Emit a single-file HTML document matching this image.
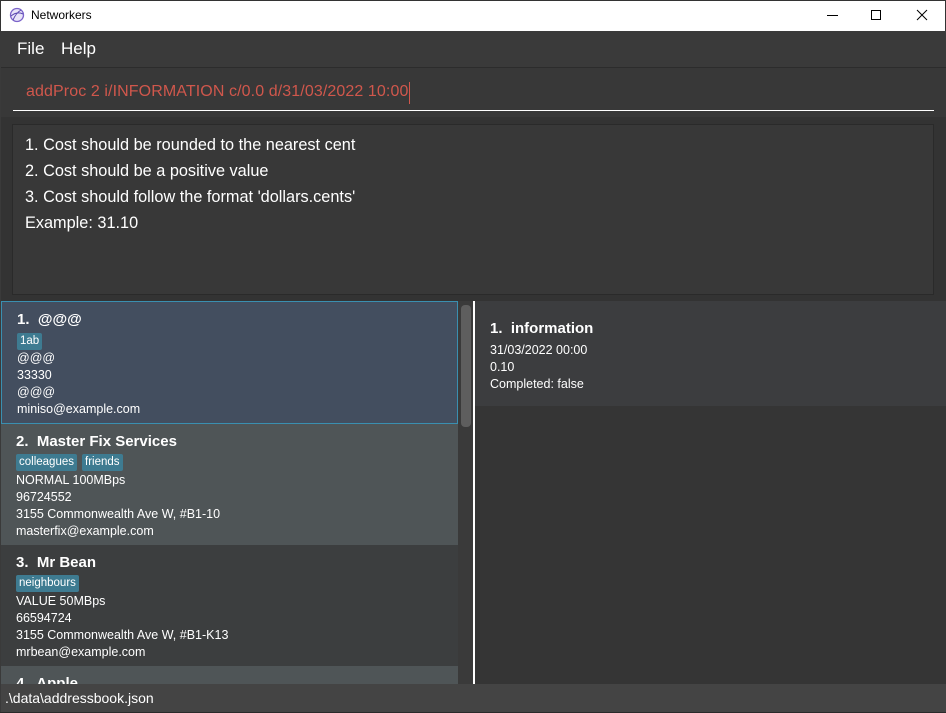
<!DOCTYPE html>
<html><head><meta charset="utf-8"><style>
*{margin:0;padding:0;box-sizing:border-box}
body{width:946px;height:713px;overflow:hidden;background:#3a3a3a;font-family:"Liberation Sans",sans-serif;position:relative}
.a{position:absolute;white-space:nowrap}
.tag{position:absolute;background:#3e7b91;color:#fff;font-size:11.5px;height:17px;line-height:17px;padding:0 3px;border-radius:2px}
.nm{font-size:15px;font-weight:bold;color:#fff}
.ln{font-size:12.5px;color:#fff}
</style></head><body>
<div class="a" style="left:0;top:0;width:946px;height:31px;background:#fff;border:1px solid #333;border-bottom:none"></div>
<svg class="a" style="left:9px;top:7px" width="16" height="16" viewBox="0 0 16 16"><circle cx="8" cy="8" r="6.5" fill="#e8e4f8" stroke="#7b63c9" stroke-width="1.3"/><path d="M2 9 Q8 4 14 7 M4 13 Q7 6 12 3" stroke="#5a48b0" fill="none"/></svg>
<div class="a" style="left:31px;top:8px;font-size:12px;color:#000">Networkers</div>
<div class="a" style="left:827px;top:15px;width:11px;height:1px;background:#000"></div>
<div class="a" style="left:871px;top:10px;width:10px;height:10px;border:1px solid #000"></div>
<svg class="a" style="left:916px;top:9px" width="12" height="12"><path d="M1 1L11 11M11 1L1 11" stroke="#000" stroke-width="1"/></svg>
<div class="a" style="left:0;top:31px;width:946px;height:36px;background:#3a3a3a"></div>
<div class="a" style="left:17px;top:39px;font-size:17px;color:#fff">File</div>
<div class="a" style="left:61px;top:39px;font-size:17px;color:#fff">Help</div>
<div class="a" style="left:1px;top:67px;width:945px;height:50px;background:#383838;border-top:1px solid #2c2c2c"></div>
<div class="a" style="left:26px;top:83px;font-size:16px;color:#d0574c;letter-spacing:0.1px">addProc 2 i/INFORMATION c/0.0 d/31/03/2022 10:00</div>
<div class="a" style="left:409px;top:82px;width:1px;height:22px;background:#d0574c"></div>
<div class="a" style="left:13px;top:110px;width:921px;height:1px;background:#fff"></div>
<div class="a" style="left:1px;top:117px;width:945px;height:184px;background:#333"></div>
<div class="a" style="left:12px;top:124px;width:922px;height:171px;background:#383838;border:1px solid #2a2a2a"></div>
<div class="a" style="left:25px;top:132px;font-size:16.3px;color:#fff;line-height:26px">1. Cost should be rounded to the nearest cent<br>2. Cost should be a positive value<br>3. Cost should follow the format 'dollars.cents'<br>Example: 31.10</div>
<div class="a" style="left:1px;top:301px;width:457px;height:383px;background:#3c3e3f"></div>
<div class="a" style="left:1px;top:301px;width:457px;height:123px;background:#434e5f;border:1px solid #3a8fb0"></div>
<div class="a nm" style="left:17px;top:311px">1.&nbsp; @@@</div>
<div class="tag" style="left:17px;top:333px">1ab</div>
<div class="a ln" style="left:17px;top:350px;line-height:17px">@@@<br>33330<br>@@@<br>miniso@example.com</div>
<div class="a" style="left:1px;top:424px;width:457px;height:121px;background:#4f5557"></div>
<div class="a nm" style="left:16px;top:433px">2.&nbsp; Master Fix Services</div>
<div class="tag" style="left:16px;top:454px">colleagues</div>
<div class="tag" style="left:82px;top:454px">friends</div>
<div class="a ln" style="left:16px;top:472px;line-height:17px">NORMAL 100MBps<br>96724552<br>3155 Commonwealth Ave W, #B1-10<br>masterfix@example.com</div>
<div class="a nm" style="left:16px;top:554px">3.&nbsp; Mr Bean</div>
<div class="tag" style="left:16px;top:575px">neighbours</div>
<div class="a ln" style="left:16px;top:593px;line-height:17px">VALUE 50MBps<br>66594724<br>3155 Commonwealth Ave W, #B1-K13<br>mrbean@example.com</div>
<div class="a" style="left:1px;top:666px;width:457px;height:18px;background:#4f5557;overflow:hidden"><div class="a nm" style="left:15px;top:9px">4.&nbsp; Apple</div></div>
<div class="a" style="left:458px;top:301px;width:15px;height:383px;background:#3a3a3a"></div>
<div class="a" style="left:461px;top:305px;width:10px;height:122px;background:#5e5e5e;border-radius:4px"></div>
<div class="a" style="left:473px;top:301px;width:2px;height:383px;background:#fff"></div>
<div class="a" style="left:475px;top:301px;width:471px;height:383px;background:#353535"></div>
<div class="a" style="left:475px;top:301px;width:471px;height:105px;background:#3c3d3f"></div>
<div class="a nm" style="left:490px;top:320px">1.&nbsp; information</div>
<div class="a ln" style="left:490px;top:342px;line-height:17px">31/03/2022 00:00<br>0.10<br>Completed: false</div>
<div class="a" style="left:1px;top:684px;width:945px;height:28px;background:#444"></div>
<div class="a" style="left:5px;top:690px;font-size:14px;color:#fff">.\data\addressbook.json</div>
<div class="a" style="left:0;top:712px;width:946px;height:1px;background:#2a2a2a"></div>
</body></html>
